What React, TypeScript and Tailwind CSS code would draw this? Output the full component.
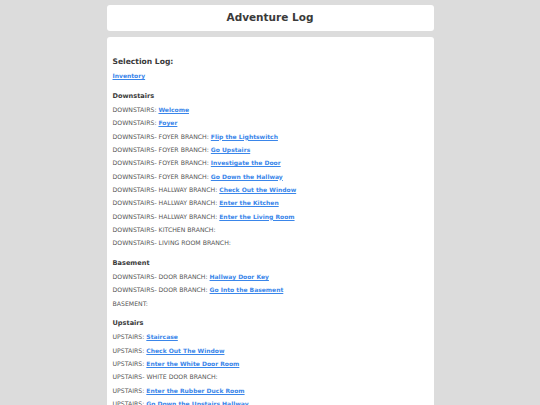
import React from 'react';

type Row = { label: string; link?: string };

const sections: { title: string; rows: Row[] }[] = [
    {
        title: 'Downstairs',
        rows: [
            { label: 'DOWNSTAIRS:', link: 'Welcome' },
            { label: 'DOWNSTAIRS:', link: 'Foyer' },
            { label: 'DOWNSTAIRS- FOYER BRANCH:', link: 'Flip the Lightswitch' },
            { label: 'DOWNSTAIRS- FOYER BRANCH:', link: 'Go Upstairs' },
            { label: 'DOWNSTAIRS- FOYER BRANCH:', link: 'Investigate the Door' },
            { label: 'DOWNSTAIRS- FOYER BRANCH:', link: 'Go Down the Hallway' },
            { label: 'DOWNSTAIRS- HALLWAY BRANCH:', link: 'Check Out the Window' },
            { label: 'DOWNSTAIRS- HALLWAY BRANCH:', link: 'Enter the Kitchen' },
            { label: 'DOWNSTAIRS- HALLWAY BRANCH:', link: 'Enter the Living Room' },
            { label: 'DOWNSTAIRS- KITCHEN BRANCH:' },
            { label: 'DOWNSTAIRS- LIVING ROOM BRANCH:' },
        ],
    },
    {
        title: 'Basement',
        rows: [
            { label: 'DOWNSTAIRS- DOOR BRANCH:', link: 'Hallway Door Key' },
            { label: 'DOWNSTAIRS- DOOR BRANCH:', link: 'Go Into the Basement' },
            { label: 'BASEMENT:' },
        ],
    },
    {
        title: 'Upstairs',
        rows: [
            { label: 'UPSTAIRS:', link: 'Staircase' },
            { label: 'UPSTAIRS:', link: 'Check Out The Window' },
            { label: 'UPSTAIRS:', link: 'Enter the White Door Room' },
            { label: 'UPSTAIRS- WHITE DOOR BRANCH:' },
            { label: 'UPSTAIRS:', link: 'Enter the Rubber Duck Room' },
            { label: 'UPSTAIRS:', link: 'Go Down the Upstairs Hallway' },
        ],
    },
];

const LogLink = ({ children }: { children: React.ReactNode }) => (
    <a href="#" className="text-[6px] font-bold text-[#3a86ea] underline">
        {children}
    </a>
);

const App = () => {
    return (
        <div className="min-h-[405px] bg-[#dcdcdc] font-['DejaVu_Sans',sans-serif]">
            <div className="mx-auto flex w-[327px] flex-col gap-[6px] pt-[5px]">
                <div className="flex h-[26px] items-center justify-center rounded-[3px] bg-white">
                    <h1 className="text-[10.5px] font-bold text-[#3a3a3a]">Adventure Log</h1>
                </div>
                <div className="min-h-[400px] rounded-[3px] bg-white px-[6px] pt-[18px]">
                    <h2 className="h-[13.33px] text-[7.6px] font-bold leading-[13.33px] text-[#3a3a3a]">
                        Selection Log:
                    </h2>
                    <div className="mt-[1px] h-[13.33px] text-[6.2px] leading-[13.33px]">
                        <LogLink>Inventory</LogLink>
                    </div>
                    {sections.map((s) => (
                        <div key={s.title}>
                            <h3 className="mt-[7px] h-[13.33px] text-[6.6px] font-bold leading-[13.33px] text-[#3a3a3a]">
                                {s.title}
                            </h3>
                            {s.rows.map((r, i) => (
                                <div key={i} className="h-[13.33px] text-[6.2px] leading-[13.33px] text-[#555]">
                                    {r.label} {r.link && <LogLink>{r.link}</LogLink>}
                                </div>
                            ))}
                        </div>
                    ))}
                </div>
            </div>
        </div>
    );
};

export default App;
